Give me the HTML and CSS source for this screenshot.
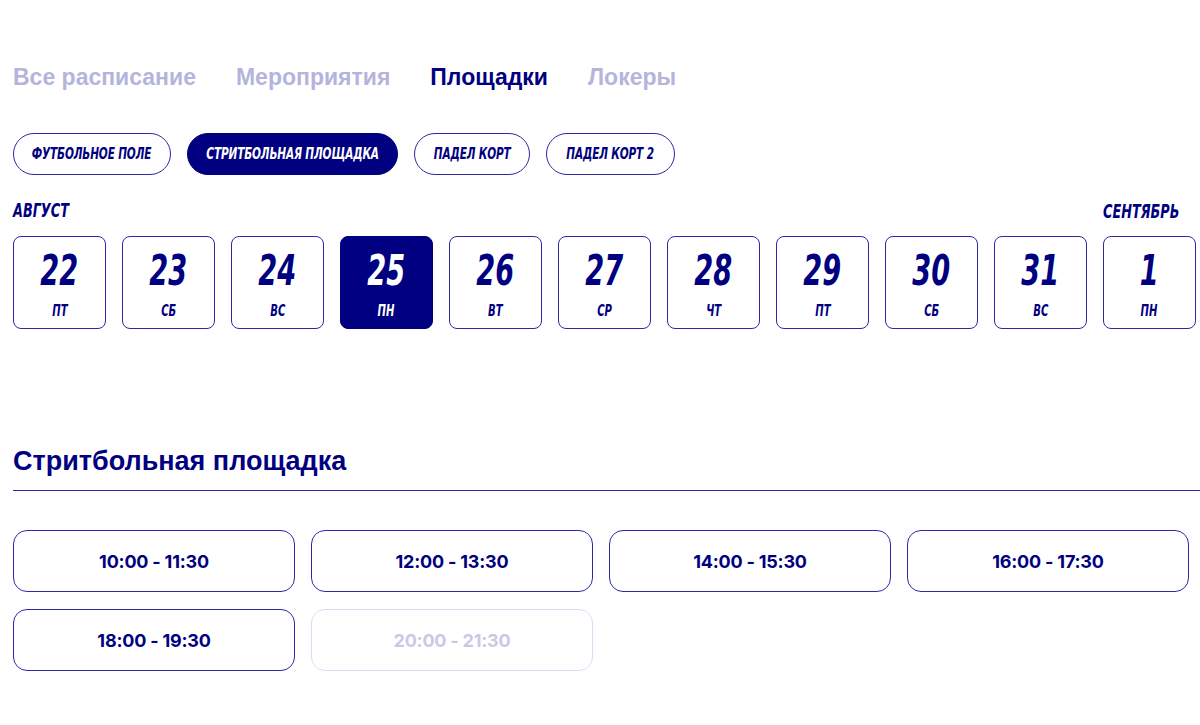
FILE: index.html
```html
<!DOCTYPE html>
<html lang="ru">
<head>
<meta charset="utf-8">
<link rel="stylesheet" href="styles.css">
</head>
<body>
<div class="page">
  <nav class="tabs">
    <span class="tab">Все расписание</span>
    <span class="tab">Мероприятия</span>
    <span class="tab active">Площадки</span>
    <span class="tab">Локеры</span>
  </nav>

  <div class="pills">
    <span class="pill p-foot"><span class="cond">Футбольное поле</span></span>
    <span class="pill p-street active"><span class="cond">Стритбольная площадка</span></span>
    <span class="pill p-padel"><span class="cond">Падел корт</span></span>
    <span class="pill p-padel2"><span class="cond">Падел корт 2</span></span>
  </div>

  <div class="months">
    <span class="month m-aug"><span class="cond">Август</span></span>
    <span class="month m-sep"><span class="cond">Сентябрь</span></span>
  </div>
  <div class="days">
    <div class="day"><span class="num">22</span><span class="wd">пт</span></div>
    <div class="day"><span class="num">23</span><span class="wd">сб</span></div>
    <div class="day"><span class="num">24</span><span class="wd">вс</span></div>
    <div class="day active"><span class="num">25</span><span class="wd">пн</span></div>
    <div class="day"><span class="num">26</span><span class="wd">вт</span></div>
    <div class="day"><span class="num">27</span><span class="wd">ср</span></div>
    <div class="day"><span class="num">28</span><span class="wd">чт</span></div>
    <div class="day"><span class="num">29</span><span class="wd">пт</span></div>
    <div class="day"><span class="num">30</span><span class="wd">сб</span></div>
    <div class="day"><span class="num">31</span><span class="wd">вс</span></div>
    <div class="day"><span class="num">1</span><span class="wd">пн</span></div>
  </div>

  <h2 class="venue">Стритбольная площадка</h2>
  <div class="rule"></div>

  <div class="slots">
    <div class="slot">10:00 - 11:30</div>
    <div class="slot">12:00 - 13:30</div>
    <div class="slot">14:00 - 15:30</div>
    <div class="slot">16:00 - 17:30</div>
    <div class="slot">18:00 - 19:30</div>
    <div class="slot disabled">20:00 - 21:30</div>
  </div>
</div>
</body>
</html>
```

FILE: styles.css
```css
html, body {
  margin: 0;
  background: #ffffff;
}
body {
  font-family: "Liberation Sans", Arial, sans-serif;
  color: #000080;
}
.page {
  padding: 62px 0 0 13px;
  overflow: hidden;
}
.tabs {
  display: flex;
  gap: 40px;
  height: 30px;
  align-items: center;
}
.tab {
  font-family: "Liberation Sans", Arial, sans-serif;
  font-weight: 700;
  font-size: 23px;
  color: #b4b4dc;
}
.tab.active {
  color: #000080;
}
.cond {
  display: inline-block;
  white-space: nowrap;
  font-family: "DejaVu Sans Condensed", "DejaVu Sans", sans-serif;
  font-weight: 700;
  font-style: italic;
  text-transform: uppercase;
}
.pills {
  display: flex;
  gap: 16px;
  margin-top: 41px;
}
.pill {
  height: 42px;
  box-sizing: border-box;
  border: 1px solid #2a2aa6;
  border-radius: 21px;
  display: flex;
  align-items: center;
  justify-content: center;
  color: #000080;
  font-size: 15px;
}
.pill .cond {
  transform: scaleX(0.78);
  letter-spacing: -0.2px;
}
.p-foot { width: 158px; }
.p-street { width: 211px; }
.p-padel { width: 116px; }
.p-padel2 { width: 129px; }
.pill.active {
  background: #000080;
  border-color: #000080;
  color: #ffffff;
}
.months,
.days {
  display: grid;
  grid-template-columns: repeat(11, 93px);
  column-gap: 16px;
}
.months {
  margin-top: 23px;
  height: 25px;
  align-items: center;
}
.month {
  font-size: 19px;
  color: #000080;
}
.month .cond {
  transform: scaleX(0.75);
  transform-origin: left center;
}
.m-aug { grid-column: 1; }
.m-sep { grid-column: 11; padding-top: 2px; }
.days {
  margin-top: 13px;
}
.day {
  height: 93px;
  box-sizing: border-box;
  border: 1px solid #2a2aa6;
  border-radius: 8px;
  display: flex;
  flex-direction: column;
  align-items: center;
  color: #000080;
}
.day.active {
  background: #000080;
  border-color: #000080;
  color: #ffffff;
}
.num,
.wd {
  display: inline-block;
  font-family: "DejaVu Sans Condensed", "DejaVu Sans", sans-serif;
  font-weight: 700;
  font-style: italic;
  text-transform: uppercase;
}
.num {
  font-size: 42px;
  line-height: 42px;
  margin-top: 13px;
  transform: scaleX(0.72);
}
.wd {
  font-size: 16px;
  line-height: 16px;
  margin-top: 11px;
  transform: scaleX(0.7);
}
.venue {
  margin: 117px 0 0 0;
  font-family: "Liberation Sans", Arial, sans-serif;
  font-weight: 700;
  font-size: 27px;
  line-height: 30px;
  color: #000080;
}
.rule {
  margin-top: 14px;
  height: 1px;
  background: #2a2ab0;
}
.slots {
  display: grid;
  grid-template-columns: repeat(4, 282px);
  column-gap: 16px;
  row-gap: 17px;
  margin-top: 39px;
}
.slot {
  height: 62px;
  box-sizing: border-box;
  border: 1px solid #2a2aa6;
  border-radius: 14px;
  display: flex;
  align-items: center;
  justify-content: center;
  font-family: Inter, "Liberation Sans", sans-serif;
  font-weight: 700;
  font-size: 18px;
  letter-spacing: -0.2px;
  color: #000080;
}
.slot.disabled {
  border-color: #dcdcf2;
  color: #c9c9e6;
}
```
